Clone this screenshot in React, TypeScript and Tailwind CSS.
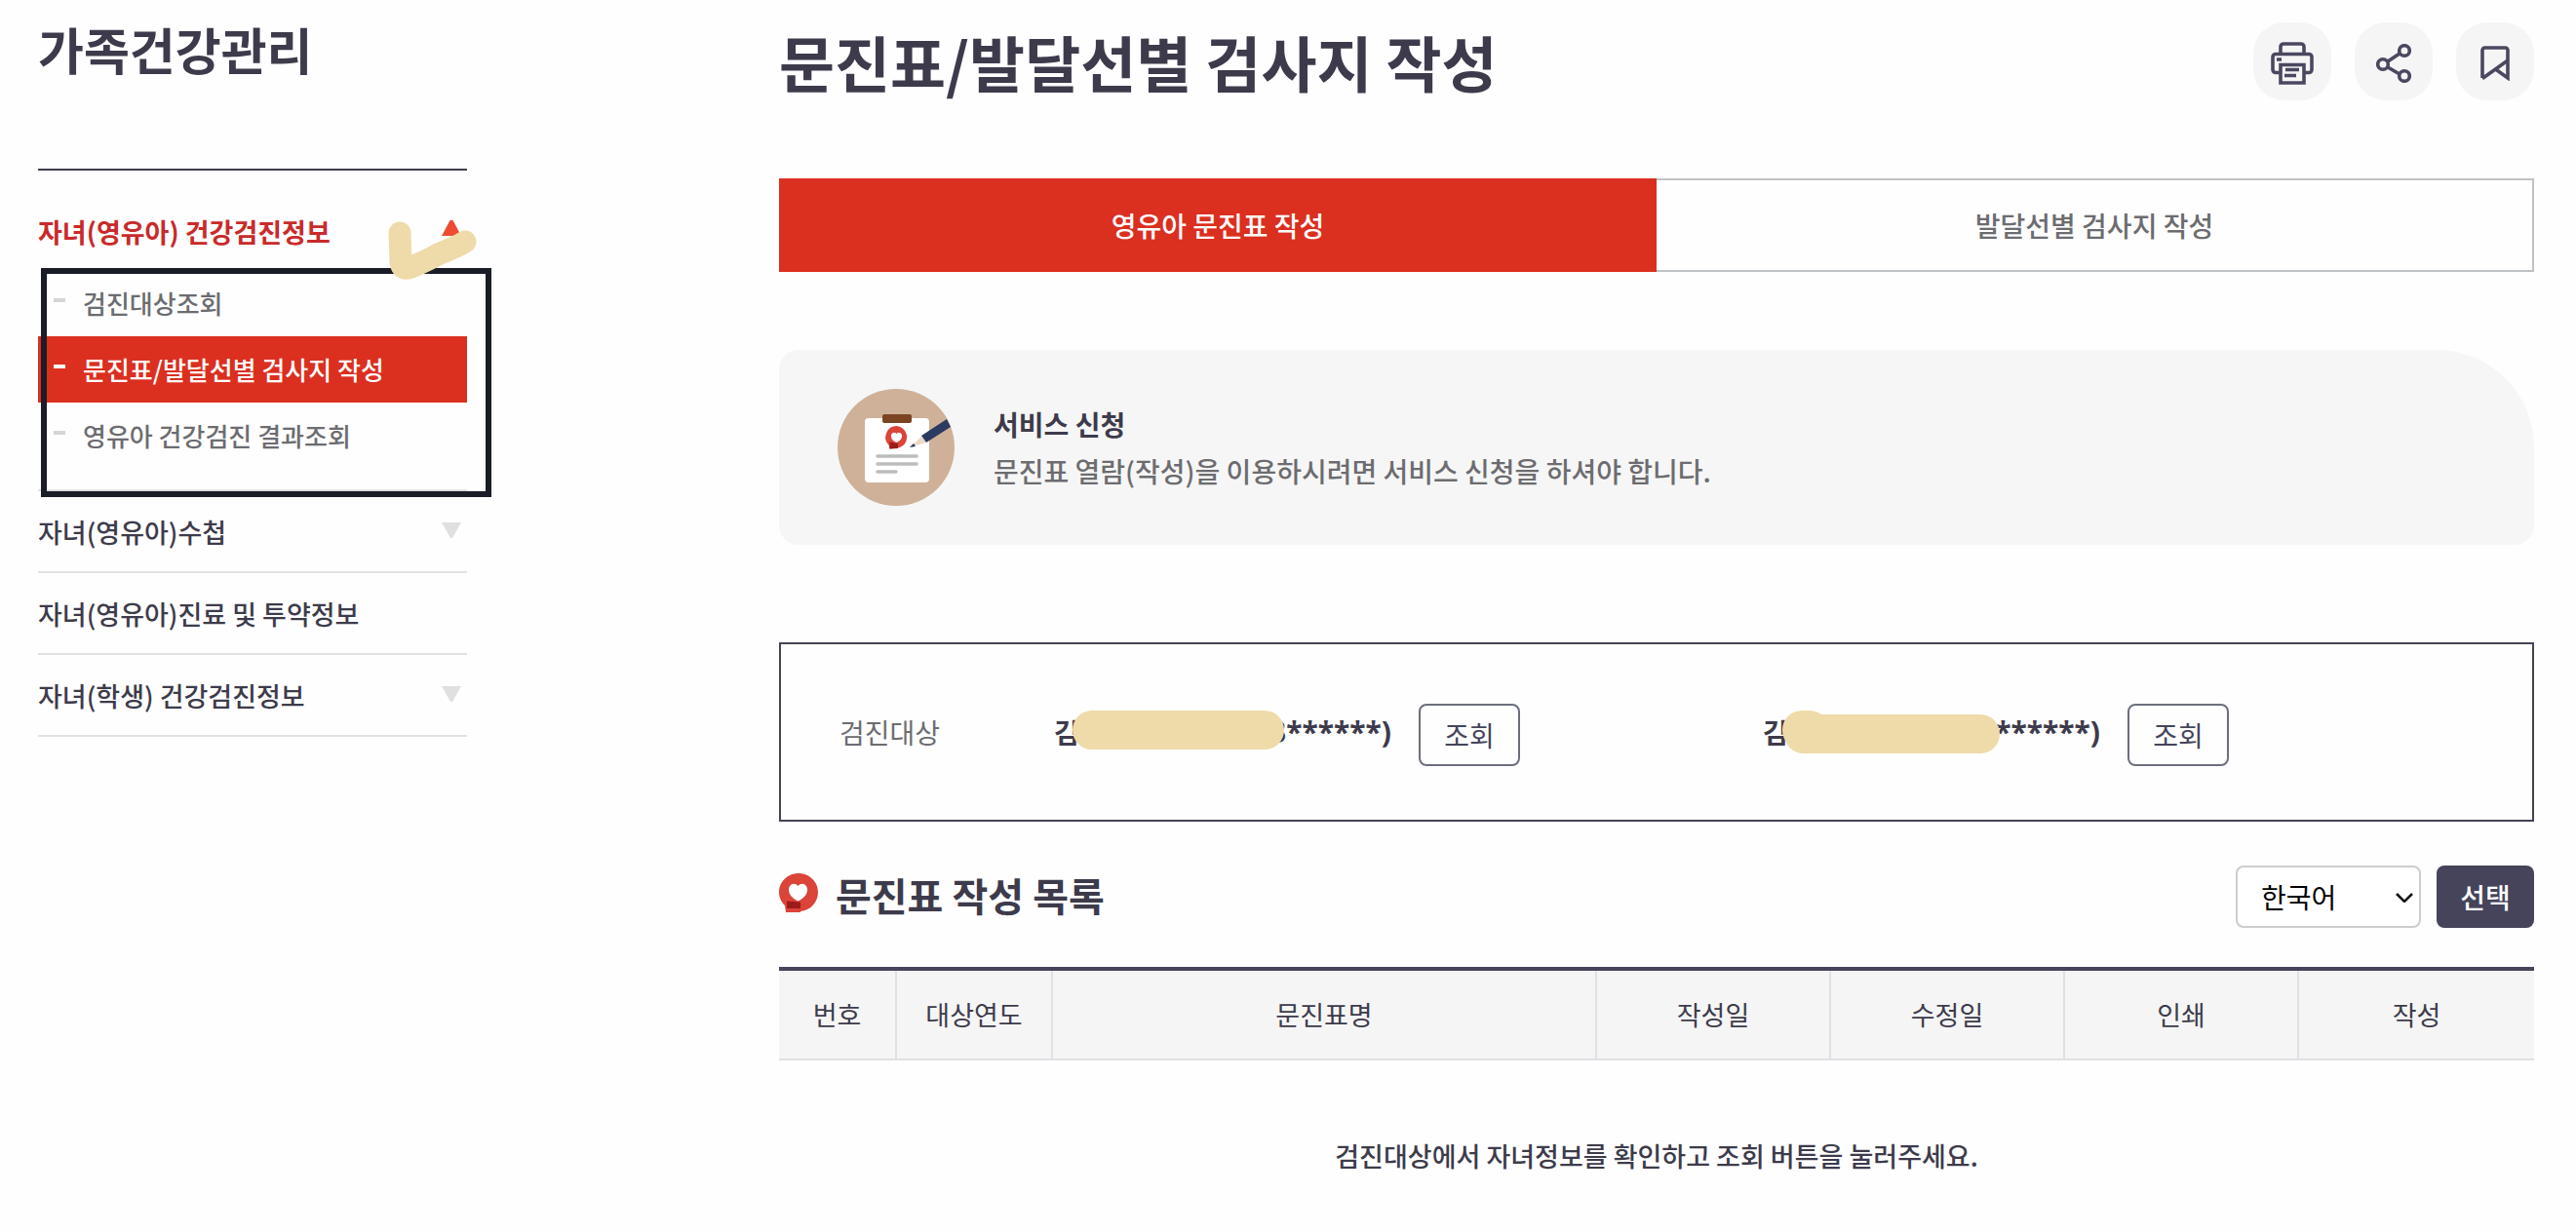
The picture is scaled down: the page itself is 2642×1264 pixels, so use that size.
import React from "react";

const columns = ["번호", "대상연도", "문진표명", "작성일", "수정일", "인쇄", "작성"];

const subMenu = [
  { label: "검진대상조회", active: false },
  { label: "문진표/발달선별 검사지 작성", active: true },
  { label: "영유아 건강검진 결과조회", active: false },
];

const menu = [
  { label: "자녀(영유아)수첩", expandable: true },
  { label: "자녀(영유아)진료 및 투약정보", expandable: false },
  { label: "자녀(학생) 건강검진정보", expandable: true },
];

function Badge({ className }: { className: string }) {
  return (
    <svg viewBox="0 0 40 40" className={className} aria-hidden="true">
      <path d="M20 0C31 0 40 8.500 40 19.500C40 30 32 38 22 39V40H7L6 33C2.500 29.500 0 25 0 19.500C0 8.500 9 0 20 0Z" fill="#db4439" />
      <path d="M8 28.500L22 29.500V36H8Z" fill="#9c1c19" />
      <path d="M19.500 28.500C12.500 25.500 9.500 20 10 16C10.500 11 16 9 19.500 13C23 9 28.500 11 29 16C29.500 20 26.500 25.500 19.500 28.500Z" fill="#fff" />
    </svg>
  );
}

function ClipboardPicture() {
  return (
    <svg viewBox="0 0 120 120" className="size-[120px] shrink-0" aria-hidden="true">
      <circle cx="60" cy="60" r="60" fill="#cfb199" />
      <rect x="28" y="30" width="66" height="66" rx="4" fill="#fff" />
      <rect x="46" y="26" width="30" height="9" rx="2" fill="#7a4423" />
      <path d="M60.500 38a11.500 11.500 0 1 1-2 23l-5 .5-1-4A11.500 11.500 0 0 1 60.500 38Z" fill="#db4439" />
      <path d="M53.500 54.500L62 56v5l-8.500.5Z" fill="#9c1c19" />
      <path d="M60.500 55c-4-1.500-6-4.500-5.500-7.500s4-3.500 5.500-1.500c1.500-2 5-1.500 5.500 1.500s-1.500 6-5.500 7.500Z" fill="#fff" />
      <path d="M41 69H81M41 77H81M41 85H60" stroke="#bdbdbd" strokeWidth="3.500" strokeLinecap="round" />
      <path d="M86 49L74 60L91 55Z" fill="#eed9c8" />
      <path d="M78 56L74 60L80 59Z" fill="#2b3a5f" />
      <path d="M86 48L112 31L116 39L91 55Z" fill="#2b3a5f" />
    </svg>
  );
}

function PrintIcon() {
  return (
    <svg viewBox="0 0 44 44" className="size-11" fill="none" stroke="#4a4860" strokeWidth="3.600" aria-hidden="true">
      <path d="M10 12V5a3 3 0 0 1 3-3H31a3 3 0 0 1 3 3V12" />
      <path d="M10 31.500H5a3 3 0 0 1-3-3V15.500a3 3 0 0 1 3-3H39a3 3 0 0 1 3 3V28.500a3 3 0 0 1-3 3H34" />
      <path d="M10 23.500H34V42H10Z" />
      <path d="M6 18H11M15 28.500H29M14 34.500H26" />
    </svg>
  );
}

function ShareIcon() {
  return (
    <svg viewBox="0 0 36 40" className="h-10 w-9" fill="none" stroke="#4a4860" strokeWidth="3.600" aria-hidden="true">
      <circle cx="7" cy="21" r="5.300" />
      <circle cx="29" cy="7" r="5.300" />
      <circle cx="29" cy="33" r="5.300" />
      <path d="M12 18L24 10M12 24L24 31" />
    </svg>
  );
}

function SaveIcon() {
  return (
    <svg viewBox="0 0 30 36" className="h-9 w-[30px]" fill="none" stroke="#4a4860" strokeWidth="3.600" aria-hidden="true">
      <path d="M2 33V4.500a2.500 2.500 0 0 1 2.500-2.500H25.500a2.500 2.500 0 0 1 2.500 2.500V33L15.500 24" />
      <path d="M2 33.500L28 15" />
    </svg>
  );
}

const tools = [
  { label: "인쇄", icon: <PrintIcon /> },
  { label: "공유", icon: <ShareIcon /> },
  { label: "저장", icon: <SaveIcon /> },
];

function Triangle({ up = false }: { up?: boolean }) {
  return (
    <svg viewBox="0 0 20 16" className={up ? "mr-1.5 mb-2 h-4 w-5" : "mr-1.5 mb-1 h-4 w-5"} aria-hidden="true">
      <path d={up ? "M8.500 0H11.500L20 16H0Z" : "M0 0H20L11 16H9Z"} fill={up ? "#ee4b33" : "#e0e0e0"} />
    </svg>
  );
}

function Sidebar() {
  return (
    <nav className="w-[440px] shrink-0">
      <h2 className="flex h-[173px] items-start pt-3 text-[51px] leading-[76px] font-bold">가족건강관리</h2>
      <div className="relative border-t-2 border-[#3f3d4d]">
        <a href="#checkup" className="flex h-[102px] items-center justify-between pt-6 text-[27px] font-bold text-[#c92a2a]">
          자녀(영유아) 건강검진정보
          <Triangle up />
        </a>
        <ul className="border-b-2 border-[#e1e1e5] pb-[21px]">
          {subMenu.map((item) => (
            <li key={item.label}>
              <a
                href="#sub"
                className={
                  item.active
                    ? "flex h-[68px] items-center bg-[#db2f20] pb-0.5 pl-4 text-[26px] font-medium text-white"
                    : "flex h-[68px] items-center pb-0.5 pl-4 text-[26px] font-medium text-[#6c6c70]"
                }
              >
                <span className={item.active ? "mr-[18px] mb-1 h-1 w-3 bg-white" : "mr-[18px] mb-1 h-1 w-3 bg-[#d6d6d6]"} />
                {item.label}
              </a>
            </li>
          ))}
        </ul>
        <svg viewBox="0 0 470 340" className="pointer-events-none absolute top-0 left-0 h-[340px] w-[470px]" fill="none" aria-hidden="true">
          <rect x="6" y="103" width="456" height="229" stroke="#1a1c26" strokeWidth="6" />
          <path d="M371 64L372 94Q373 103 383 99Q400 92 410 86Q430 78 438 73" stroke="#eedba9" strokeWidth="23" strokeLinecap="round" strokeLinejoin="round" />
        </svg>
        {menu.map((item) => (
          <a key={item.label} href="#menu" className="flex h-[84px] items-center justify-between border-b-2 border-[#e1e1e5] pt-0.5 text-[27px] font-medium">
            {item.label}
            {item.expandable && <Triangle />}
          </a>
        ))}
      </div>
    </nav>
  );
}

function Child({ second = false }: { second?: boolean }) {
  return (
    <div className="flex w-[727px] items-center">
      <p className="relative flex w-[346px] items-center justify-between text-[28px] leading-11 font-bold">
        <span>김</span>
        <span className="font-['Noto_Sans',sans-serif] text-[30px]">{second ? "******)" : "3******)"}</span>
        <svg viewBox="0 0 346 44" className="absolute top-0 left-0 h-11 w-[346px]" aria-hidden="true">
          {second ? (
            <>
              <rect x="20" y="0" width="48" height="40" rx="20" fill="#eedba9" />
              <rect x="22" y="4" width="221" height="40" rx="20" fill="#eedba9" />
            </>
          ) : (
            <rect x="19" y="0" width="217" height="40" rx="20" fill="#eedba9" />
          )}
        </svg>
      </p>
      <button type="button" className="mt-1.5 ml-7 h-16 w-[104px] rounded-lg border-2 border-[#6c6f7d] text-[28px] text-[#45445a]">
        조회
      </button>
    </div>
  );
}

export default function App() {
  return (
    <div className="flex min-h-screen items-start gap-80 bg-[#fefefe] pr-[43px] pl-[39px] font-['Noto_Sans_CJK_KR','Noto_Sans',sans-serif] text-[#3d3b4b]">
      <Sidebar />
      <main className="min-w-0 flex-1">
        <header className="flex h-[183px] items-start justify-between pt-[23px]">
          <h1 className="text-[62px] leading-20 font-bold">문진표/발달선별 검사지 작성</h1>
          <div className="flex gap-6">
            {tools.map((tool) => (
              <button key={tool.label} type="button" aria-label={tool.label} className="flex size-20 items-center justify-center rounded-[32px] bg-[#f5f5f5] pt-1">
                {tool.icon}
              </button>
            ))}
          </div>
        </header>

        <div role="tablist" className="grid h-24 grid-cols-2 text-[28px] font-medium">
          <button type="button" role="tab" aria-selected="true" className="bg-[#db2f20] text-white">
            영유아 문진표 작성
          </button>
          <button type="button" role="tab" aria-selected="false" className="border-2 border-l-0 border-[#bec2c5] text-[#6c6c70]">
            발달선별 검사지 작성
          </button>
        </div>

        <section className="mt-20 flex h-[200px] items-center gap-10 rounded-[20px] rounded-tr-[100px] bg-[#f6f6f6] px-[60px]">
          <ClipboardPicture />
          <div className="text-[28px] leading-12">
            <h2 className="font-bold">서비스 신청</h2>
            <p className="font-medium text-[#6c6c70]">문진표 열람(작성)을 이용하시려면 서비스 신청을 하셔야 합니다.</p>
          </div>
        </section>

        <section className="mt-[100px] flex h-[184px] items-center border-2 border-[#454455] pl-[60px]">
          <h2 className="w-[220px] text-[28px] text-[#6c6c70]">검진대상</h2>
          <Child />
          <Child second />
        </section>

        <div className="mt-[45px] flex h-16 items-center justify-between">
          <div className="flex items-center gap-[18px]">
            <Badge className="mb-2 size-10" />
            <h2 className="pb-1 text-[40px] font-bold">문진표 작성 목록</h2>
          </div>
          <div className="flex gap-4">
            <div className="relative">
              <select aria-label="언어" className="h-16 w-[190px] appearance-none rounded-lg border-2 border-[#cdcdcd] bg-white pl-6 text-[28px] text-black">
                <option>한국어</option>
              </select>
              <svg viewBox="0 0 18 10" className="pointer-events-none absolute top-7 right-2 h-2.5 w-[18px]" fill="none" stroke="#111" strokeWidth="2.500" aria-hidden="true">
                <path d="M1 1L9 9L17 1" />
              </svg>
            </div>
            <button type="button" className="h-16 w-[100px] rounded-lg bg-[#45445a] text-[28px] font-medium text-white">
              선택
            </button>
          </div>
        </div>

        <table className="mt-10 w-full table-fixed border-t-4 border-[#45445a]">
          <colgroup>
            <col className="w-[120px]" />
            <col className="w-[160px]" />
            <col />
            <col className="w-60" />
            <col className="w-60" />
            <col className="w-60" />
            <col className="w-[242px]" />
          </colgroup>
          <thead>
            <tr className="h-[93px] border-b-2 border-[#e1e1e5] bg-[#f5f5f5] text-[27px]">
              {columns.map((name) => (
                <th key={name} scope="col" className="border-r-2 border-[#e1e1e5] font-normal last:border-r-0">
                  {name}
                </th>
              ))}
            </tr>
          </thead>
          <tbody>
            <tr>
              <td colSpan={7} className="h-[170px] pt-7 text-center text-[27px] font-medium">
                검진대상에서 자녀정보를 확인하고 조회 버튼을 눌러주세요.
              </td>
            </tr>
          </tbody>
        </table>
      </main>
    </div>
  );
}
